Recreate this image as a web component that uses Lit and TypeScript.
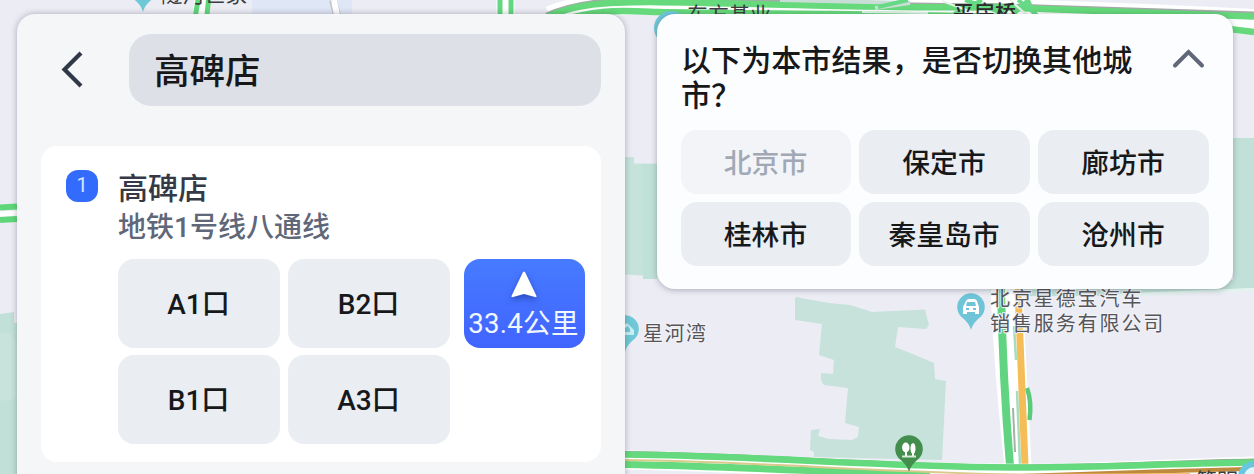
import { LitElement, html, css, svg } from "lit";
import { customElement, property } from "lit/decorators.js";

@customElement("city-map")
class CityMap extends LitElement {
  static styles = css`
    :host { display: block; }
    svg { display: block; width: 1254px; height: 474px; }
    text { font-family: Roboto, "Noto Sans CJK SC", sans-serif; fill: #55565a; font-weight: 400; }
    .label { paint-order: stroke; stroke: #f3f3f8; stroke-width: 2px; }
    .bold { font-weight: 400; fill: #3c3d40; }
    .strong { font-weight: 500; fill: #2c2c2e; }
  `;

  private pin(x: number, y: number, color: string, glyph: unknown) {
    return svg`<g transform="translate(${x} ${y})">
      <path d="M0 23C-2 16-6 13-10 9.500A13.800 13.800 0 1 1 10 9.500C6 13 2 16 0 23Z" fill=${color}/>
      ${glyph}
    </g>`;
  }

  render() {
    return html`<svg viewBox="0 0 1254 474" aria-hidden="true">
      <rect width="1254" height="474" fill="#ececf5"/>
      <path d="M252 0H352V14H252Z" fill="#dfe6f5"/>
      <path d="M0 314L14 312V323H17V474H0Z" fill="#c1e1d8"/>
      <path d="M0 333Q12 330 17 345V398Q8 402 0 400Z" fill="#c7e3dc"/>
      <path d="M625 157H634V163.500H657V279H643V275.500L625 274.500Z" fill="#c5e3db"/>
      <path d="M642 164H657V279H643Z" fill="#c0e1d8"/>
      <path d="M1233 138H1254V288L1100 296H990V280H1233Z" fill="#c1e1d8"/>
      <path d="M1110 294L1254 288V291L1110 297Z" fill="#e3f4ee"/>

      <path d="M795 298Q796 296 801 298L829 303L850 305L872 312L925 309.500L929 325L926 329L898 327L895 347L915 355L934 363L935 379L946 381L942 460L814 457V452L810 450L811 430L820 429L818 436L829 439L852 440L858 437L859 427L845 423L848 388L824 385Q820 381 821 373L833 374L834 360L819 355L822 324L795 320Z" fill="#c6e2da"/>

      <g fill="none">
        <path d="M0 207.500L17 206.500M0 220L17 219" stroke="#5fd779" stroke-width="6"/>
        <path d="M0 214L17 213" stroke="#fff" stroke-width="5"/>
        <path d="M202 0L200 15" stroke="#fff" stroke-width="15"/>
        <path d="M198 0L195.500 15M208.500 0L207 15" stroke="#5fd779" stroke-width="5"/>
        <path d="M333 0L337 15" stroke="#c4c6cf" stroke-width="8"/>
        <path d="M334 0L337 15" stroke="#fff" stroke-width="6"/>
        <path d="M505.500 0V15" stroke="#fff" stroke-width="18"/>
        <path d="M500 0V15M511 0V15" stroke="#62d981" stroke-width="5"/>

        <path d="M550 17C578 5 610 4 660 3C790 5 1000 7 1254 20" stroke="#fff" stroke-width="22"/>
        <path d="M547 16C575 3 606 1 650 1C780 2 925 8 990 6.500L1254 15" stroke="#a5aaa8" stroke-width="7"/>
        <path d="M547 17C575 4 606 2 650 2C780 4 925 9 990 7L1254 16.500" stroke="#65d97b" stroke-width="6.500"/>
        <path d="M574 17C604 9 630 11 658 12C780 15 1100 12 1254 32" stroke="#65d97b" stroke-width="6.500"/>
        <path d="M780 0L910 3L875 8" stroke="#c8ddd5" stroke-width="4"/>
        <path d="M878 7L908 0M954 14L982 0M1028 0L1034 14M965 0L1006 14M1014 14L1028 0M1018 0L1037 15" stroke="#65d984" stroke-width="4"/>
        <path d="M862 12L928 13M942 1L969 11M1010 0L1027 15" stroke="#e4f5eb" stroke-width="2"/>

        <path d="M1000 289C1003 350 1008 415 1014 465" stroke="#fff" stroke-width="19"/>
        <path d="M1015 289L1024 465" stroke="#fff" stroke-width="15"/>
        <path d="M1014 326L1016 360M1017 391L1020 465" stroke="#a9dcbc" stroke-width="2.500"/>
        <path d="M1027 388Q1032 402 1029.500 420" stroke="#5bcb79" stroke-width="4.500"/>
        <path d="M1013 408L1015 452" stroke="#a2b4a8" stroke-width="2"/>
        <path d="M1001 289C1002 340 1005 405 1010 466" stroke="#61d481" stroke-width="8"/>
        <path d="M1018 289L1025 466" stroke="#f5bd57" stroke-width="7"/>

        <path d="M625 460C760 462 900 475 1060 473L1254 466" stroke="#fff" stroke-width="19"/>
        <path d="M625 453.500C760 455 870 466 1010 467C1100 467 1180 462 1254 461" stroke="#93a59a" stroke-width="5"/>
        <path d="M625 454.500C760 456 870 466 1010 467.500C1100 468 1180 463 1254 462.500" stroke="#65d97d" stroke-width="6.500"/>
        <path d="M625 464.500C760 467 890 475 930 475" stroke="#65d97d" stroke-width="7"/>
        <path d="M625 460C760 461 910 475 1060 475L1247 468.500" stroke="#d9c98c" stroke-width="2"/>
        <path d="M1020 476C1100 473 1170 471 1247 469" stroke="#be8b3e" stroke-width="4"/>
        <path d="M1010 476L1190 475" stroke="#f5bd67" stroke-width="4"/>
      </g>

      <circle cx="1254" cy="477" r="13" fill="#e2f5fb" stroke="#68c6de" stroke-width="6"/>
      ${this.pin(143, -11, "#6fc8d8", svg``)}
      <circle cx="671" cy="28" r="17" fill="#6fc8d8"/>
      ${this.pin(625, 329, "#6fc8d8", svg`<path d="M-5 5V0L2-6L9 1V6H-5Z" fill="#c9eef4"/><path d="M0 3V-1L3-3L5 0V3Z" fill="#6fc8d8"/>`)}
      ${this.pin(971, 307, "#6fc4d7", svg`
        <path d="M-8 0L-5-6Q-4-8-2-8H3Q5-8 6-6L8 0V7H4V5H-4V7H-8Z" fill="#fff"/>
        <path d="M-4-5H4L5-1H-5Z" fill="#6fc4d7"/><path d="M-5 2H-2M2 2H5" stroke="#6fc4d7" stroke-width="2"/>`)}
      ${this.pin(909, 449, "#438e4c", svg`
        <ellipse cx="-3.200" cy="-1.500" rx="3.700" ry="5" fill="#fff"/>
        <ellipse cx="4" cy="-0.500" rx="2.500" ry="5.500" fill="#fff"/>
        <path d="M-3 2V7M4 2V7" stroke="#fff" stroke-width="2"/><path d="M-7 7.500H7" stroke="#d9ead9" stroke-width="2"/>`)}

      <text class="bold" x="161" y="2" font-size="21.500">隧河世家</text>
      <text class="bold" x="687" y="22" font-size="21">东方基业</text>
      <text class="strong" x="953" y="20" font-size="21">平房桥</text>
      <text class="label" x="643" y="341" font-size="20" letter-spacing="1.500">星河湾</text>
      <text class="label" x="990" y="306" font-size="20" letter-spacing="1.900">北京星德宝汽车</text>
      <text class="label" x="990" y="331" font-size="20" letter-spacing="1.900">销售服务有限公司</text>
      <text class="bold" x="1196" y="488" font-size="21">管明</text>
    </svg>`;
  }
}

@customElement("search-panel")
class SearchPanel extends LitElement {
  @property() query = "高碑店";
  exits = ["A1口", "B2口", "B1口", "A3口"];

  static styles = css`
    :host {
      display: block; box-sizing: border-box; width: 608px; height: 480px;
      padding: 20px 24px 0; border-radius: 18px 18px 0 0; background: #f4f6f8;
      box-shadow: 0 0 6px rgba(40, 44, 60, 0.34);
      font-family: Roboto, "Noto Sans CJK SC", sans-serif; font-weight: 500;
    }
    .top { display: flex; align-items: center; height: 72px; }
    .back { width: 88px; height: 72px; flex: none; }
    .field {
      flex: 1; height: 72px; line-height: 77px; padding-left: 25px; box-sizing: border-box;
      border-radius: 22px; background: #dee0e8; color: #17181a; font-size: 35.500px;
    }
    .card {
      display: flex; gap: 20px; box-sizing: border-box; height: 316px; margin-top: 40px;
      padding: 24px 16px 0 25px; border-radius: 16px; background: #fff;
    }
    .badge {
      width: 32px; height: 32px; flex: none; border-radius: 12px; background: #336cfd;
      color: #d5e5ff; font-size: 20px; line-height: 31px; text-align: center; font-weight: 400;
    }
    .info { flex: 1; }
    .name { height: 36px; line-height: 37px; font-size: 30px; color: #343945; }
    .line { height: 40px; line-height: 43px; font-size: 28px; color: #5f6779; }
    .row { display: flex; gap: 14px; margin-top: 13px; align-items: flex-start; }
    .exits { display: grid; grid-template-columns: 162px 162px; grid-auto-rows: 88.500px; gap: 7.500px 8px; }
    .exit {
      display: flex; align-items: center; justify-content: center; border-radius: 16px;
      background: #eaedf2; color: #17181a; font-size: 28px; box-sizing: border-box;
      padding: 0 1px 2px 0;
    }
    .go {
      display: flex; flex-direction: column; align-items: center; box-sizing: border-box;
      width: 121px; height: 89px; padding: 11px 2px 0 0; border-radius: 16px;
      background: linear-gradient(#467bff, #4164ff); color: #f1f6ff;
      font-size: 27.500px; font-weight: 400; white-space: nowrap;
    }
    .arrow { width: 36px; height: 34px; filter: drop-shadow(0 3px 3px rgba(20, 35, 120, 0.5)); }
    .dist { line-height: 39px; letter-spacing: 0.300px; }
  `;

  render() {
    return html`
      <div class="top">
        <svg class="back" viewBox="0 0 88 72"><path d="M40 19L23.500 35.500L40 52" fill="none" stroke="#303747" stroke-width="4.200"/></svg>
        <div class="field">${this.query}</div>
      </div>
      <div class="card">
        <div class="badge">1</div>
        <div class="info">
          <div class="name">高碑店</div>
          <div class="line">地铁1号线八通线</div>
          <div class="row">
            <div class="exits">${this.exits.map((e) => html`<div class="exit">${e}</div>`)}</div>
            <div class="go">
              <svg class="arrow" viewBox="0 0 36 34"><path d="M18 1.500Q19 1.500 19.500 3L30.500 26Q31 27.500 29 27L18 24L7 27Q5 27.500 5.500 26L16.500 3Q17 1.500 18 1.500Z" fill="#fff"/></svg>
              <div class="dist">33.4公里</div>
            </div>
          </div>
        </div>
      </div>`;
  }
}

@customElement("city-switch")
class CitySwitch extends LitElement {
  @property() current = "北京市";
  cities = ["北京市", "保定市", "廊坊市", "桂林市", "秦皇岛市", "沧州市"];

  static styles = css`
    :host {
      display: block; box-sizing: border-box; width: 576px; height: 275px;
      padding: 28px 24px 0; border-radius: 18px; background: #fcfdff;
      box-shadow: 0 1px 6px rgba(40, 44, 60, 0.34);
      font-family: Roboto, "Noto Sans CJK SC", sans-serif; font-weight: 500; color: #17181a;
    }
    .head { display: flex; justify-content: space-between; height: 88px; box-sizing: border-box; padding: 1px 0 0; }
    .question { width: 456px; font-size: 30.100px; line-height: 35px; }
    .fold { width: 40px; height: 34px; flex: none; }
    .grid { display: grid; grid-template-columns: 170px 171px 171px; grid-auto-rows: 64px; gap: 7.500px 8px; }
    .city {
      display: flex; align-items: center; justify-content: center; border-radius: 16px;
      background: #eaedf2; font-size: 27.800px; box-sizing: border-box; padding: 0 1px 2px 0;
    }
    .current { background: #f2f4f8; color: #a1a8b5; }
  `;

  render() {
    return html`
      <div class="head">
        <div class="question">以下为本市结果，是否切换其他城市？</div>
        <svg class="fold" viewBox="0 0 40 34"><path d="M6 22.500L19.500 9L33 22.500" fill="none" stroke="#606779" stroke-width="4" stroke-linecap="round"/></svg>
      </div>
      <div class="grid">
        ${this.cities.map((c) => html`<div class="city ${c === this.current ? "current" : ""}">${c}</div>`)}
      </div>`;
  }
}

@customElement("app-root")
class AppRoot extends LitElement {
  static styles = css`
    :host { display: grid; width: 1254px; height: 474px; overflow: hidden; }
    .map, .panels { grid-area: 1 / 1; }
    .panels { display: flex; align-items: flex-start; gap: 32px; padding: 14px 0 0 17px; height: 460px; box-sizing: border-box; z-index: 1; }
  `;
  render() {
    return html`
      <city-map class="map"></city-map>
      <div class="panels">
        <search-panel></search-panel>
        <city-switch></city-switch>
      </div>`;
  }
}
